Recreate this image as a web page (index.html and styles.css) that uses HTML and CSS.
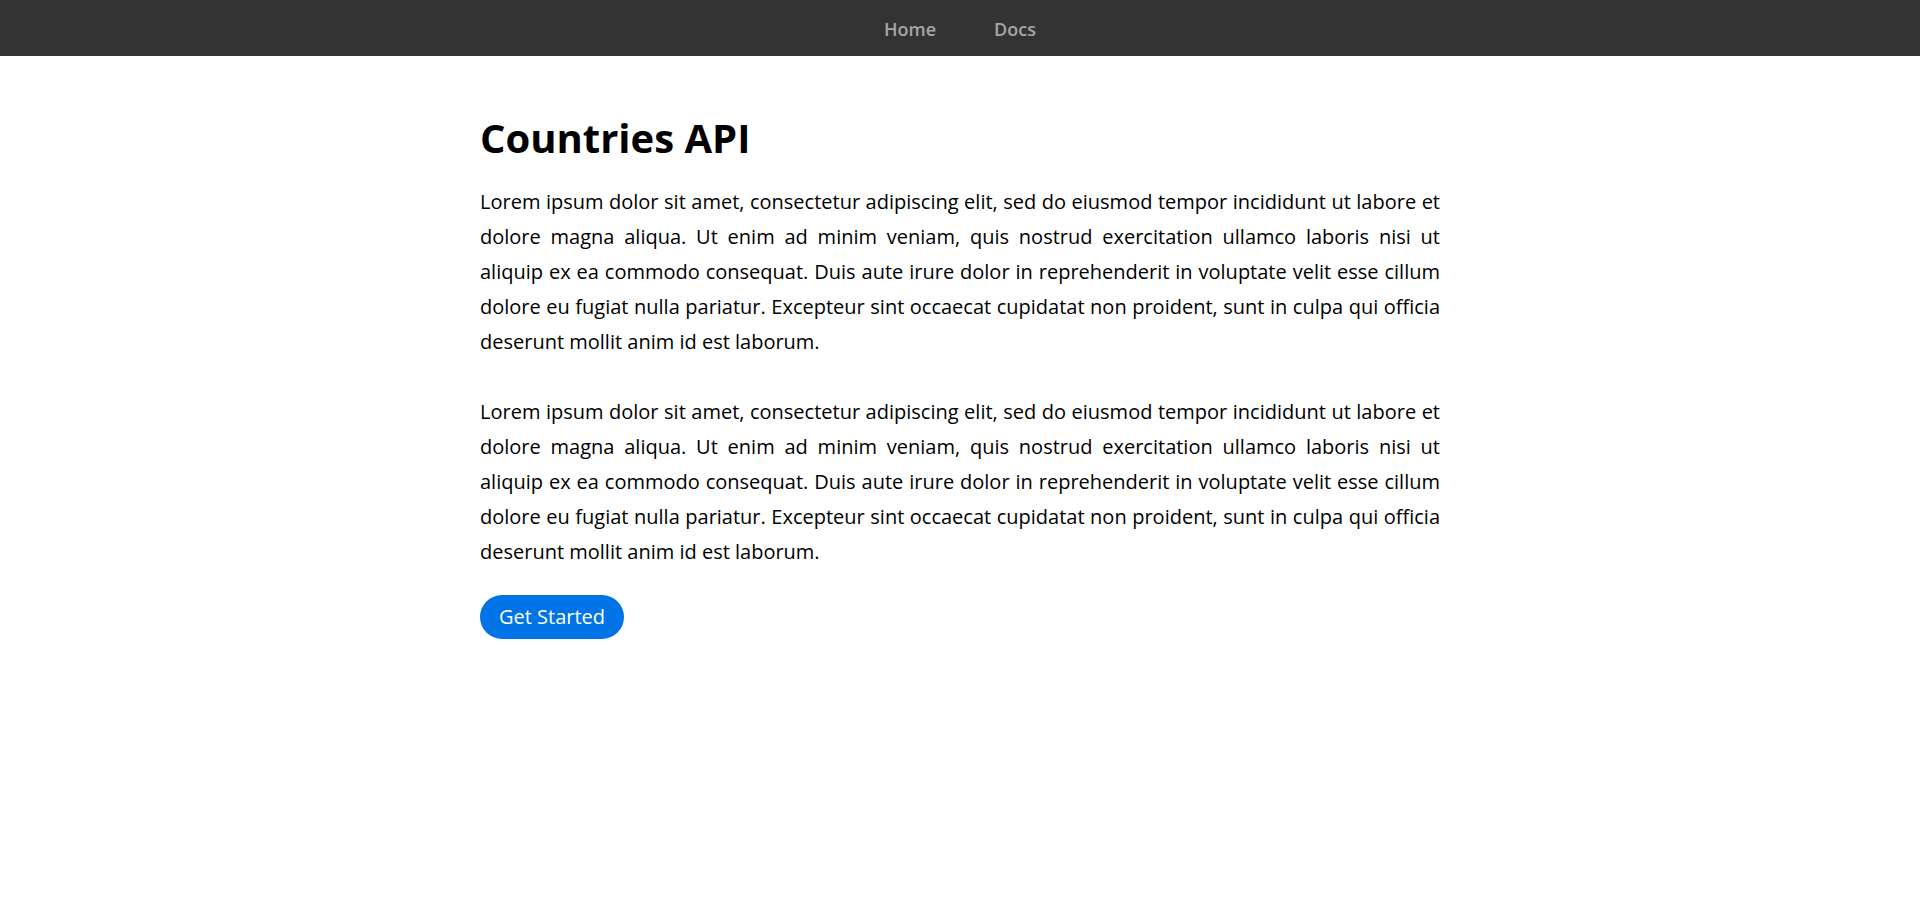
FILE: index.html
```html
<!DOCTYPE html>
<html lang="en">
<head>
<meta charset="utf-8">
<title>Countries API</title>
<link rel="stylesheet" href="styles.css">
</head>
<body>
<nav class="topnav">
  <a class="nav-link" href="#">Home</a>
  <a class="nav-link" href="#">Docs</a>
</nav>
<main class="content">
  <h1 class="title">Countries API</h1>
  <p class="text">Lorem ipsum dolor sit amet, consectetur adipiscing elit, sed do eiusmod tempor incididunt ut labore et dolore magna aliqua. Ut enim ad minim veniam, quis nostrud exercitation ullamco laboris nisi ut aliquip ex ea commodo consequat. Duis aute irure dolor in reprehenderit in voluptate velit esse cillum dolore eu fugiat nulla pariatur. Excepteur sint occaecat cupidatat non proident, sunt in culpa qui officia deserunt mollit anim id est laborum.</p>
  <p class="text">Lorem ipsum dolor sit amet, consectetur adipiscing elit, sed do eiusmod tempor incididunt ut labore et dolore magna aliqua. Ut enim ad minim veniam, quis nostrud exercitation ullamco laboris nisi ut aliquip ex ea commodo consequat. Duis aute irure dolor in reprehenderit in voluptate velit esse cillum dolore eu fugiat nulla pariatur. Excepteur sint occaecat cupidatat non proident, sunt in culpa qui officia deserunt mollit anim id est laborum.</p>
  <a class="btn" href="#">Get Started</a>
</main>
</body>
</html>
```

FILE: styles.css
```css
* { box-sizing: border-box; }
body {
  margin: 0;
  font-family: "Open Sans", "Liberation Sans", sans-serif;
  color: #000;
  background: #fff;
}
.topnav {
  height: 56px;
  padding-top: 2px;
  background: #333;
  display: flex;
  justify-content: center;
  align-items: center;
  gap: 58px;
}
.nav-link {
  color: #a6a6a6;
  text-decoration: none;
  font-size: 18px;
  font-weight: 600;
  line-height: 24px;
}
.content {
  width: 960px;
  margin: 0 auto;
  padding-top: 54px;
}
.title {
  margin: 0 0 19px;
  font-size: 40px;
  font-weight: 700;
  line-height: normal;
}
.text {
  margin: 0 0 35px;
  font-size: 20px;
  line-height: 35px;
  text-align: justify;
}
.text:last-of-type { margin-bottom: 26px; }
.btn {
  display: inline-block;
  padding: 8px 19px;
  font-size: 20px;
  line-height: 28px;
  color: #fff;
  background: #0073e6;
  border-radius: 22px;
  text-decoration: none;
}
```
